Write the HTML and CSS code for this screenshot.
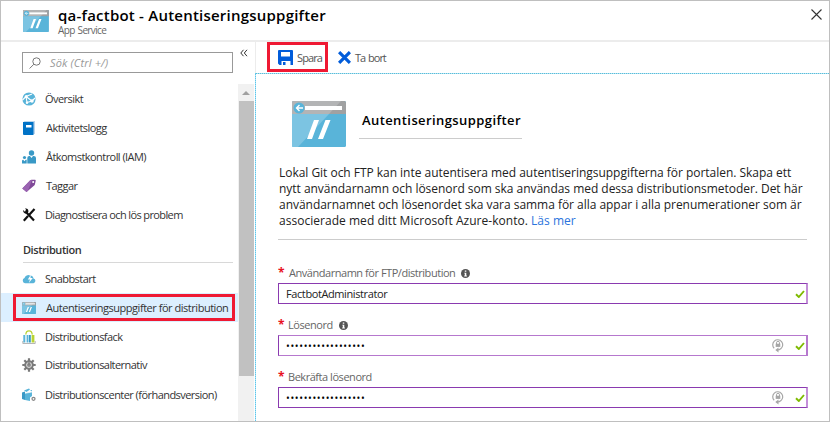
FILE: index.html
```html
<!DOCTYPE html>
<html lang="sv">
<head>
<meta charset="utf-8">
<title>qa-factbot - Autentiseringsuppgifter</title>
<link rel="stylesheet" href="styles.css">
</head>
<body>
<svg width="0" height="0" class="defs">
  <symbol id="site" viewBox="0 0 54 46">
    <rect width="54" height="46" rx="1.5" fill="#59b4d9"/>
    <path d="M0 13V1.500Q0 0 1.500 0H52.500Q54 0 54 1.500V13z" fill="#a0a1a2"/>
    <path d="M0 1.500Q0 0 1.500 0H49L37 13H0z" fill="#b3b4b5"/>
    <path d="M0 13H37L6 46H1.500Q0 46 0 44.500z" fill="#7cc4e2"/>
    <rect x="13" y="5" width="37" height="4" fill="#fff"/>
    <circle cx="7" cy="7" r="5.500" fill="#59b4d9"/>
    <path d="M11 7H4.500M7.500 4L4.500 7l3 3" fill="none" stroke="#fff" stroke-width="1.400"/>
    <path d="M22 19h5L20 38h-5zM33.500 19h5L31 38h-5z" fill="#fff"/>
  </symbol>
  <symbol id="check" viewBox="0 0 10 8"><path d="M1 4.300L3.800 7 9 1" fill="none" stroke="#7fba00" stroke-width="1.900"/></symbol>
  <symbol id="info" viewBox="0 0 9 9"><circle cx="4.500" cy="4.500" r="4.500" fill="#555"/><path d="M3.800 1.500h1.500v1.300H3.800zM3.300 3.700h2v2.900h.6v.8H3.200v-.8h.6V4.500h-.5z" fill="#fff"/></symbol>
  <symbol id="reset" viewBox="0 0 12 15"><path d="M2.200 10.300A5 5 0 1 1 8.800 10.700Q7.800 12 5 12" fill="none" stroke="#a6a6a6" stroke-width="1.200"/><path d="M6.500 9.500v5L3.300 12z" fill="#a6a6a6"/><path d="M4.500 6V4.800a1.500 1.500 0 0 1 3 0V6" fill="none" stroke="#a6a6a6"/><rect x="3.700" y="5.700" width="4.600" height="3.200" fill="#a6a6a6"/></symbol>
</svg>
<div class="window">
  <header class="top">
    <svg class="top-icon"><use href="#site"/></svg>
    <div class="top-text">
      <h1>qa-factbot - Autentiseringsuppgifter</h1>
      <p>App Service</p>
    </div>
    <svg class="close" viewBox="0 0 11 11"><path d="M.5.500l10 10M10.500.500l-10 10" stroke="#333" stroke-width="1.100"/></svg>
  </header>
  <div class="body">
    <aside class="side">
      <div class="nav">
        <div class="search">
          <svg viewBox="0 0 12 12"><circle cx="7.500" cy="4.500" r="3.700"/><path d="M4.900 7.200L.6 11.500"/></svg>
          <span>Sök (Ctrl +/)</span>
        </div>
        <ul class="menu">
          <li><svg viewBox="0 0 14 14"><circle cx="7" cy="7" r="6.600" fill="#59b4d9"/><path d="M4 4.500L10 2M4 4.500L5 10.500M4 4.500l6 4.500M10 9l-5 1.500M.5 8L4 4.500M10 9l3-3" stroke="#fff" stroke-width="1.100" fill="none"/><circle cx="4.200" cy="4.500" r="1.500" fill="#fff"/><circle cx="10" cy="9" r="1.700" fill="#fff"/><circle cx="5" cy="10.700" r="1.200" fill="#fff"/></svg><span>Översikt</span></li>
          <li><svg viewBox="0 0 14 14"><path d="M1 1.500L2.500 0H13v13H1z" fill="#bcd5eb"/><path d="M1 1h10.500v13H2q-1 0-1-1z" fill="#0072c6"/><rect x="4" y="4" width="5.500" height="2.500" fill="#fff"/></svg><span class="inset">Aktivitetslogg</span></li>
          <li><svg viewBox="0 0 14 14"><circle cx="9.500" cy="3" r="2.700" fill="#3999c6"/><path d="M5.300 13.500V8Q5.300 6 7.300 6h.7l1.500 2L11 6h.8Q14 6 14 8v5.500z" fill="#3999c6"/><circle cx="2.500" cy="7.500" r="1.600" fill="#3999c6"/><path d="M0 13.500V11q0-1.200 1.200-1.200l1.300 1.400 1.200-1.400h1v3.700z" fill="#3999c6"/></svg><span class="inset">Åtkomstkontroll (IAM)</span></li>
          <li><svg viewBox="0 0 14 14"><path d="M.3 9.500L8 1.500Q9 .8 10 .8h3q.8 0 .7 1L13 5q-.2 1-.8 1.500L4.500 13z" fill="#804998"/><path d="M.3 9.500L8 1.500Q9 .8 10 .8L6 11.700 4.500 13z" fill="#9a63b1"/><circle cx="11.200" cy="3" r="1" fill="#fff"/></svg><span class="inset">Taggar</span></li>
          <li><svg viewBox="0 0 14 14"><path d="M12.500 1L7 7M6 8l-4.200 4.700M4 4l8 8.500" stroke="#111" stroke-width="2.200"/><path d="M1 2l2 1.800L4 1.500 2.900.5q2-.5 3.100 1T5.700 5L4 5.800Q1 5 1 2z" fill="#111"/></svg><span class="tight">Diagnostisera och lös problem</span></li>
        </ul>
        <h2>Distribution</h2>
        <ul class="menu">
          <li><svg viewBox="0 0 14 14"><path d="M3 11.200A2.700 2.700 0 0 1 2.500 6 4 4 0 0 1 8 3.500a3.500 3.500 0 0 1 3.500 3 2.400 2.400 0 0 1 0 4.700z" fill="#59b4d9"/><path d="M8.800 2.800L5.800 7.500H8L6.800 11l4-5H8.500z" fill="#fff"/></svg><span>Snabbstart</span></li>
          <li class="active"><svg viewBox="0 0 14 14"><use href="#site" x="0" y="1" width="14" height="12"/></svg><span class="inset loose">Autentiseringsuppgifter för distribution</span></li>
          <li><svg viewBox="0 0 14 14"><path d="M3.800 4.500Q4 .8 7 .8t3.200 3.700" fill="none" stroke="#b8d432" stroke-width="1.300"/><path d="M1.300 5h2v7.500h-2z" fill="#59b4d9"/><path d="M4.600 5h1.900v7.500H4.600z" fill="#59b4d9"/><path d="M7 5h1.800v7.500H7z" fill="#3999c6"/><path d="M9.600 5h2.800v7.500H9.600z" fill="#b8d432"/><path d="M.8 11v2.500h12.400V11" stroke="#a5a5a5" fill="none" stroke-width=".8"/></svg><span>Distributionsfack</span></li>
          <li class="up"><svg viewBox="0 0 14 14"><path d="M7 .3v13.400M.3 7h13.400M2.300 2.300l9.400 9.400M11.700 2.300l-9.400 9.400" stroke="#7a7a7a" stroke-width="2.200"/><circle cx="7" cy="7" r="4.800" fill="#7a7a7a"/><circle cx="7" cy="7" r="2.500" fill="#8c8c8c" stroke="#e2e2e2" stroke-width=".9"/><path d="M7 3.500v3.500" stroke="#7a7a7a" stroke-width="1.300"/></svg><span>Distributionsalternativ</span></li>
          <li><svg viewBox="0 0 14 14"><path d="M0 4.500l3-1V12l-3-1z" fill="#3999c6"/><path d="M3 5.300l7-1.300v4l-2 1.500V13l-5-1z" fill="#59b4d9"/><path d="M2 2.600L7 .5l1 1L4.500 4zM8 2.600l2-.6v1.500z" fill="#59b4d9"/><path d="M3 5.300l7-1.300" stroke="#fff" stroke-width=".6"/><circle cx="11.500" cy="10.800" r="1.500" fill="none" stroke="#888" stroke-width="1.300"/></svg><span>Distributionscenter (förhandsversion)</span></li>
        </ul>
      </div>
      <div class="rail">
        <span class="collapse"><svg viewBox="0 0 8 8"><path d="M3.500.800L.8 4l2.700 3.200M7 .8L4.300 4 7 7.200" fill="none" stroke="#333"/></svg></span>
        <div class="scroll"><i class="arrow"></i><i class="thumb"></i></div>
      </div>
    </aside>
    <main class="main">
      <div class="tools">
        <div class="save"><svg viewBox="0 0 15 15"><path d="M1 0h13q1 0 1 1v14h-2.500v-4h-9v4H1.500L0 13.500V1q0-1 1-1zm2 2v4.500h9V2z" fill="#015cda" fill-rule="evenodd"/><rect x="5" y="12" width="2.500" height="3" fill="#015cda"/></svg><span>Spara</span></div>
        <div class="delete"><svg viewBox="0 0 12 12"><path d="M1 1l10 10M11 1L1 11" stroke="#015cda" stroke-width="2.900"/></svg><span>Ta bort</span></div>
      </div>
      <section class="panel">
        <div class="hero"><svg><use href="#site"/></svg><h3>Autentiseringsuppgifter</h3></div>
        <p class="intro"><span>Lokal Git och FTP kan inte autentisera med autentiseringsuppgifterna för portalen. Skapa ett</span><br><span>nytt användarnamn och lösenord som ska användas med dessa distributionsmetoder. Det här</span><br><span>användarnamnet och lösenordet ska vara samma för alla appar i alla prenumerationer som är</span><br><span class="last">associerade med ditt Microsoft Azure-konto. <a>Läs mer</a></span></p>
        <div class="field first"><label><b>*</b><span>Användarnamn för FTP/distribution</span><svg class="info"><use href="#info"/></svg></label>
          <div class="input"><span class="value">FactbotAdministrator</span><svg class="check"><use href="#check"/></svg></div></div>
        <div class="field"><label><b>*</b><span>Lösenord</span><svg class="info"><use href="#info"/></svg></label>
          <div class="input soft"><span class="dots">••••••••••••••••••</span><svg class="reset"><use href="#reset"/></svg><svg class="check"><use href="#check"/></svg></div></div>
        <div class="field"><label><b>*</b><span>Bekräfta lösenord</span></label>
          <div class="input"><span class="dots">••••••••••••••••••</span><svg class="reset"><use href="#reset"/></svg><svg class="check"><use href="#check"/></svg></div></div>
      </section>
    </main>
  </div>
</div>
</body>
</html>
```
FILE: styles.css
```css
*, *::after { box-sizing: border-box; }
body, h1, h2, h3, p, ul { margin: 0; padding: 0; }
body { font-family: "Open Sans", "Noto Sans", sans-serif; font-size: 11px; color: #333; background: #fff; }
.defs { display: none; }
svg { flex: none; }
span { white-space: nowrap; }
.window { width: 830px; height: 422px; border: 1px solid #bfbfbf; display: flex; flex-direction: column; overflow: hidden; }
.top { height: 41px; flex: none; border-bottom: 2px solid #ececec; display: flex; padding: 0 7px 0 22px; }
.top-icon { width: 26px; height: 22px; margin-top: 9px; }
.top-text { margin-left: 9px; flex: 1; }
h1 { font-size: 15px; line-height: 20px; font-weight: 600; color: #000; margin-top: 4px; letter-spacing: .22px; }
.top-text p { font-size: 10px; line-height: 12px; margin-top: -1px; color: #666; letter-spacing: -.65px; word-spacing: 1px; }
.close { width: 11px; height: 11px; margin-top: 8px; }
.body { flex: 1; display: flex; min-height: 0; }
.side { width: 254px; display: flex; flex: none; }
.nav { width: 237px; padding-top: 10px; }
.search { margin-left: 21px; width: 211px; height: 21px; border: 1px solid #999; display: flex; align-items: center; padding-left: 6px; }
.search svg { width: 12px; height: 12px; fill: none; stroke: #777; stroke-width: 1; }
.search span { margin-left: 9px; font-style: italic; color: #999; letter-spacing: .15px; }
.menu { list-style: none; }
.search + .menu { margin-top: 11px; }
.menu li { height: 29px; display: flex; align-items: center; padding-left: 21px; letter-spacing: -.55px; }
.menu svg { width: 14px; height: 14px; margin-right: 9px; }
.menu .inset { margin-left: 1px; }
.menu .tight { letter-spacing: -.62px; }
.menu .loose { letter-spacing: -.47px; }
.menu .active { background: #dcefff; position: relative; }
.active::after { content: ""; position: absolute; left: 12px; top: 1px; width: 222px; height: 27px; border: 3px solid #ef1933; }
.menu .up { padding-bottom: 2px; }
h2 { margin: 11px 0 1px 22px; width: 210px; height: 23px; line-height: 19px; border-bottom: 1px solid #d8d8d8; font-size: 11px; font-weight: 600; letter-spacing: -.45px; }
.rail { width: 17px; display: flex; flex-direction: column; }
.collapse { height: 42px; padding: 7px 0 0 2px; }
.collapse svg { display: block; width: 8px; height: 8px; }
.scroll { flex: 1; background: #f1f1f1; display: flex; flex-direction: column; align-items: center; width: 16px; }
.arrow { width: 0; height: 0; border: 4px solid transparent; border-top: 0; border-bottom: 4px solid #a0a0a0; margin: 7px 0 6px; }
.thumb { width: 15px; height: 275px; background: #c1c1c1; }
.main { flex: 1; display: flex; flex-direction: column; min-width: 0; }
.tools { height: 31px; border-left: 1px solid #ececec; display: flex; }
.tools span { color: #555; letter-spacing: -.9px; }
.save { margin: 0 0 0 11px; width: 61px; height: 30px; border: 3px solid #ef1933; display: flex; align-items: center; padding-left: 8px; }
.save svg { width: 15px; height: 15px; margin-right: 4px; }
.delete { height: 31px; display: flex; align-items: center; margin-left: 10px; }
.delete svg { width: 13px; height: 13px; margin-right: 4px; }
.delete span { word-spacing: 1px; letter-spacing: -1px; }
.panel { flex: 1; border-left: 1px dotted #5cc5ea; border-top: 1px dotted #5cbcd6; background: linear-gradient(#fff, #fff) padding-box, #aee3f5 border-box; padding: 27px 20px 0 22px; }
.hero { display: flex; height: 46px; margin-left: 14px; }
.hero svg { width: 54px; height: 46px; }
.hero h3 { width: 163px; height: 38px; margin-left: 13px; padding: 2px 0 0 3px; border-bottom: 1px solid #ccc; color: #000; font-size: 13px; line-height: 34px; font-weight: 600; letter-spacing: .41px; }
.intro { margin-top: 18px; height: 75px; border-bottom: 1px solid #ccc; width: 529px; padding-left: 1px; font-size: 12px; line-height: 16px; color: #222; letter-spacing: -.03px; }
.intro .last { letter-spacing: .03px; }
.intro a { color: #2b74dd; }
.field { width: 530px; height: 52px; }
.field.first { margin-top: 25px; }
label { height: 18px; display: flex; align-items: center; color: #666; padding-bottom: 3px; }
label span { letter-spacing: -.46px; }
label b { color: #e81123; width: 10px; font-size: 12px; line-height: 12px; }
.first label b { width: 11px; }
.info { width: 9px; height: 9px; margin: 2px 0 0 6px; }
.input { height: 21px; border: 1px solid #8a3ab0; border-right: 2px solid #c48fd9; display: flex; align-items: center; padding: 0 1px 0 7px; color: #222; }
.soft { border-color: #b678ce; border-left-color: #8a3ab0; }
.value, .dots { flex: 1; }
.value { letter-spacing: -.4px; }
.check { width: 10px; height: 8px; }
.reset { width: 12px; height: 15px; margin-right: 11px; }
.dots { color: #000; font-size: 10px; letter-spacing: .65px; }
```
